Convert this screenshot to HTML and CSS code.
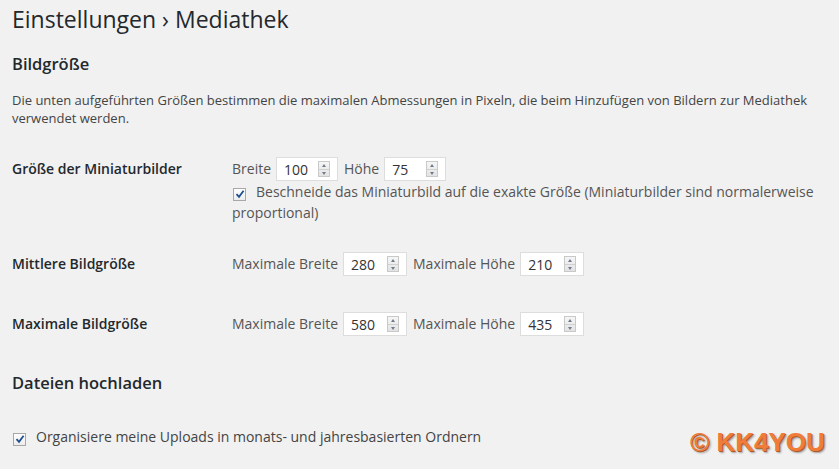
FILE: index.html
```html
<!DOCTYPE html>
<html lang="de">
<head>
<meta charset="utf-8">
<link rel="stylesheet" href="styles.css">
</head>
<body>
<div class="wrap">
  <h1 class="title">Einstellungen › Mediathek</h1>
  <h2 class="section">Bildgröße</h2>
  <p class="desc">Die unten aufgeführten Größen bestimmen die maximalen Abmessungen in Pixeln, die beim Hinzufügen von Bildern zur Mediathek verwendet werden.</p>

  <div class="form">
    <div class="row row-thumb">
      <div class="th">Größe der Miniaturbilder</div>
      <div class="td">
        <div class="fields">
          <span class="lbl">Breite</span>
          <span class="num narrow"><span class="val">100</span><span class="spin"><i class="up"></i><i class="dn"></i></span></span>
          <span class="lbl">Höhe</span>
          <span class="num narrow"><span class="val">75</span><span class="spin"><i class="up"></i><i class="dn"></i></span></span>
        </div>
        <div class="check-line"><span class="cb"><svg viewBox="0 0 10 10" width="10" height="10"><path d="M1.5 5.2 L4 7.8 L8.6 1.8" fill="none" stroke="#1e4f8f" stroke-width="1.8"/></svg></span>Beschneide das Miniaturbild auf die exakte Größe (Miniaturbilder sind normalerweise proportional)</div>
      </div>
    </div>
    <div class="row row-med">
      <div class="th">Mittlere Bildgröße</div>
      <div class="td">
        <div class="fields">
          <span class="lbl">Maximale Breite</span>
          <span class="num"><span class="val">280</span><span class="spin"><i class="up"></i><i class="dn"></i></span></span>
          <span class="lbl">Maximale Höhe</span>
          <span class="num"><span class="val">210</span><span class="spin"><i class="up"></i><i class="dn"></i></span></span>
        </div>
      </div>
    </div>
    <div class="row row-max">
      <div class="th">Maximale Bildgröße</div>
      <div class="td">
        <div class="fields">
          <span class="lbl">Maximale Breite</span>
          <span class="num"><span class="val">580</span><span class="spin"><i class="up"></i><i class="dn"></i></span></span>
          <span class="lbl">Maximale Höhe</span>
          <span class="num"><span class="val">435</span><span class="spin"><i class="up"></i><i class="dn"></i></span></span>
        </div>
      </div>
    </div>
  </div>

  <h2 class="section section-up">Dateien hochladen</h2>
  <div class="upload-line"><span class="cb"><svg viewBox="0 0 10 10" width="10" height="10"><path d="M1.5 5.2 L4 7.8 L8.6 1.8" fill="none" stroke="#1e4f8f" stroke-width="1.8"/></svg></span>Organisiere meine Uploads in monats- und jahresbasierten Ordnern</div>
</div>
<div class="mark">© KK4YOU</div>
</body>
</html>
```
FILE: styles.css
```css
html, body {
  margin: 0;
  padding: 0;
  background: #f1f1f1;
}
body {
  width: 839px;
  height: 469px;
  overflow: hidden;
  position: relative;
  font-family: "Open Sans", "Noto Sans", sans-serif;
  color: #444;
  font-size: 14px;
}
.wrap {
  padding: 0 0 0 12px;
}
.title {
  margin: 0;
  padding-top: 4px;
  font-size: 23px;
  font-weight: 400;
  line-height: 30px;
  color: #23282d;
}
.section {
  margin: 19px 0 0;
  font-size: 16.5px;
  font-weight: 600;
  line-height: 22px;
  color: #23282d;
}
.desc {
  margin: 16px 0 0;
  font-size: 13px;
  line-height: 18px;
  width: 815px;
  color: #444;
}
.form {
  margin-top: 30px;
  display: flex;
  flex-direction: column;
}
.row {
  display: flex;
}
.th {
  width: 220px;
  flex: none;
  font-weight: 600;
  color: #23282d;
  font-size: 14px;
  line-height: 24px;
}
.td {
  flex: 1;
  font-size: 14px;
  color: #555;
}
.fields {
  display: flex;
  align-items: center;
  gap: 5px;
}
.lbl {
  line-height: 24px;
}
.num + .lbl {
  margin-left: 1px;
}
.num {
  display: inline-flex;
  align-items: center;
  justify-content: space-between;
  box-sizing: border-box;
  width: 64px;
  height: 24px;
  background: #fff;
  border: 1px solid #ddd;
  padding: 0 7px 0 7px;
  color: #333;
}
.num.narrow {
  width: 62px;
}
.spin {
  display: flex;
  flex-direction: column;
  width: 12px;
  height: 16px;
  border: 1px solid #c9c9c9;
  box-sizing: border-box;
  background: linear-gradient(#f6f6f6, #e3e3e3);
}
.spin i {
  flex: 1;
  position: relative;
}
.spin i.up {
  border-bottom: 1px solid #d0d0d0;
}
.spin i::after {
  content: "";
  position: absolute;
  left: 3px;
  top: 2px;
  border-left: 2.5px solid transparent;
  border-right: 2.5px solid transparent;
}
.spin i.up::after {
  border-bottom: 3px solid #6f7b8c;
}
.spin i.dn::after {
  top: 2px;
  border-top: 3px solid #6f7b8c;
}
.check-line {
  line-height: 21px;
  width: 600px;
}
.cb {
  display: inline-flex;
  align-items: center;
  justify-content: center;
  box-sizing: border-box;
  width: 13px;
  height: 13px;
  border: 1px solid #a8a8a8;
  background: linear-gradient(#fff, #ececec);
  vertical-align: -2px;
  margin: 0 10px 0 1px;
}
.row-med { margin-top: 29px; }
.row-max { margin-top: 36px; }
.section-up { margin-top: 36px; }
.upload-line {
  margin-top: 32px;
  line-height: 22px;
  font-size: 14px;
  color: #444;
}
.mark {
  position: absolute;
  left: 690px;
  top: 427px;
  font-family: "Liberation Sans", Arial, sans-serif;
  font-weight: 700;
  font-size: 26px;
  color: #f07c3a;
  text-shadow: 1px 1px 0 #b05a2a, 2px 2px 2px rgba(0,0,0,0.35);
}
```
